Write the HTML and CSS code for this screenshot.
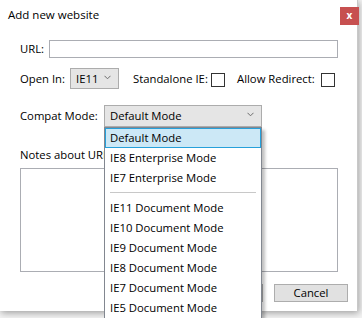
FILE: index.html
```html
<!DOCTYPE html>
<html>
<head>
<meta charset="utf-8">
<link rel="stylesheet" href="styles.css">
</head>
<body>
<div class="screen">
  <div class="dialog">
    <div class="titlebar">
      <span class="title">Add new website</span>
      <span class="close">x</span>
    </div>
    <div class="content">
      <div class="row url-row">
        <span class="lbl lbl-url">URL:</span>
        <div class="textbox"></div>
      </div>
      <div class="row open-row">
        <span class="lbl lbl-open">Open In:</span>
        <div class="select select-small">
          <span class="sel-text">IE11</span>
          <svg class="chev" width="7" height="5" viewBox="0 0 7 5"><polyline points="0.5,0.8 3.5,3.8 6.5,0.8" fill="none" stroke="#6d6d6d" stroke-width="1"/></svg>
        </div>
        <span class="lbl lbl-standalone">Standalone IE:</span>
        <span class="checkbox"></span>
        <span class="lbl lbl-redirect">Allow Redirect:</span>
        <span class="checkbox"></span>
      </div>
      <div class="row compat-row">
        <span class="lbl lbl-compat">Compat Mode:</span>
        <div class="select-wrap">
          <div class="select select-wide">
            <span class="sel-text">Default Mode</span>
            <svg class="chev" width="7" height="5" viewBox="0 0 7 5"><polyline points="0.5,0.8 3.5,3.8 6.5,0.8" fill="none" stroke="#6d6d6d" stroke-width="1"/></svg>
          </div>
          <ul class="dropdown">
            <li class="item selected">Default Mode</li>
            <li class="item">IE8 Enterprise Mode</li>
            <li class="item">IE7 Enterprise Mode</li>
            <li class="sep"></li>
            <li class="item">IE11 Document Mode</li>
            <li class="item">IE10 Document Mode</li>
            <li class="item">IE9 Document Mode</li>
            <li class="item">IE8 Document Mode</li>
            <li class="item">IE7 Document Mode</li>
            <li class="item">IE5 Document Mode</li>
          </ul>
        </div>
      </div>
      <div class="notes-label">Notes about URL:</div>
      <div class="textarea"></div>
      <div class="buttons">
        <span class="btn btn-hidden"></span>
        <span class="btn">Cancel</span>
      </div>
    </div>
  </div>
</div>
</body>
</html>
```
FILE: styles.css
```css
* { box-sizing: border-box; }
html, body { margin: 0; padding: 0; }
body {
  width: 362px;
  height: 318px;
  overflow: hidden;
  background: #f3f3f3;
  font-family: "Open Sans", "Noto Sans", sans-serif;
  font-size: 11.3px;
  color: #000;
}
.screen {
  position: relative;
  width: 362px;
  height: 318px;
  overflow: hidden;
}
.dialog {
  width: 358px;
  height: 311px;
  background: #fff;
  border-right: 1px solid #c8c8c8;
  box-shadow: 1px 2px 7px rgba(0,0,0,0.35);
}
.titlebar {
  height: 30px;
  display: flex;
  align-items: flex-start;
  justify-content: space-between;
}
.title {
  padding-left: 8px;
  padding-top: 7px;
  line-height: 16px;
  font-size: 11.5px;
}
.close {
  margin-top: 7px;
  margin-right: -2px;
  width: 19px;
  height: 18px;
  background: #c75050;
  color: #fff;
  font-size: 10px;
  font-weight: bold;
  line-height: 17px;
  text-align: center;
}
.content {
  padding: 0 19px 0 20px;
}
.row {
  display: flex;
  align-items: center;
}
.lbl { line-height: 16px; white-space: nowrap; }
.url-row { margin-top: 10px; }
.lbl-url { width: 29px; }
.textbox {
  flex: 1;
  height: 18px;
  border: 1px solid #abadb3;
  background: #fff;
}
.open-row { margin-top: 10px; }
.lbl-open { width: 50px; }
.select {
  display: flex;
  align-items: center;
  justify-content: space-between;
  background: #e5e5e5;
  border: 1px solid #acacac;
}
.select-small {
  width: 49px;
  height: 21px;
  padding: 0 7px 0 5px;
}
.select-wide {
  width: 158px;
  height: 22px;
  padding: 0 7px 0 5px;
}
.chev { display: block; margin-top: -3px; }
.sel-text { line-height: 16px; }
.lbl-standalone { margin-left: 14px; width: 78px; }
.lbl-redirect { margin-left: 12px; width: 84px; }
.checkbox {
  width: 14px;
  height: 14px;
  border: 1px solid #333;
  background: #fff;
  margin-top: 3px;
}
.compat-row { margin-top: 16px; }
.lbl-compat { width: 84px; }
.select-wrap { position: relative; }
.dropdown {
  position: absolute;
  left: 0;
  top: 22px;
  width: 158px;
  margin: 0;
  padding: 0;
  list-style: none;
  background: #fff;
  border: 1px solid #828790;
  box-shadow: 3px 3px 3px rgba(0,0,0,0.25);
  z-index: 5;
}
.item {
  height: 20px;
  line-height: 20px;
  padding-left: 5px;
  white-space: nowrap;
}
.item.selected {
  background: #cce8f6;
  border: 1px solid #26a0da;
  line-height: 18px;
  padding-left: 4px;
}
.sep {
  height: 10px;
  position: relative;
}
.sep::after {
  content: "";
  position: absolute;
  left: 5px;
  right: 5px;
  top: 4px;
  border-top: 1px solid #c8c8c8;
}
.notes-label {
  margin-top: 20px;
  line-height: 16px;
}
.textarea {
  margin-top: 5px;
  height: 104px;
  border: 1px solid #abadb3;
}
.buttons {
  margin-top: 12px;
  display: flex;
  justify-content: flex-end;
  gap: 11px;
  margin-right: -10px;
}
.btn {
  width: 74px;
  height: 18px;
  border: 1px solid #adadad;
  background: #e1e1e1;
  text-align: center;
  line-height: 16px;
}
```
